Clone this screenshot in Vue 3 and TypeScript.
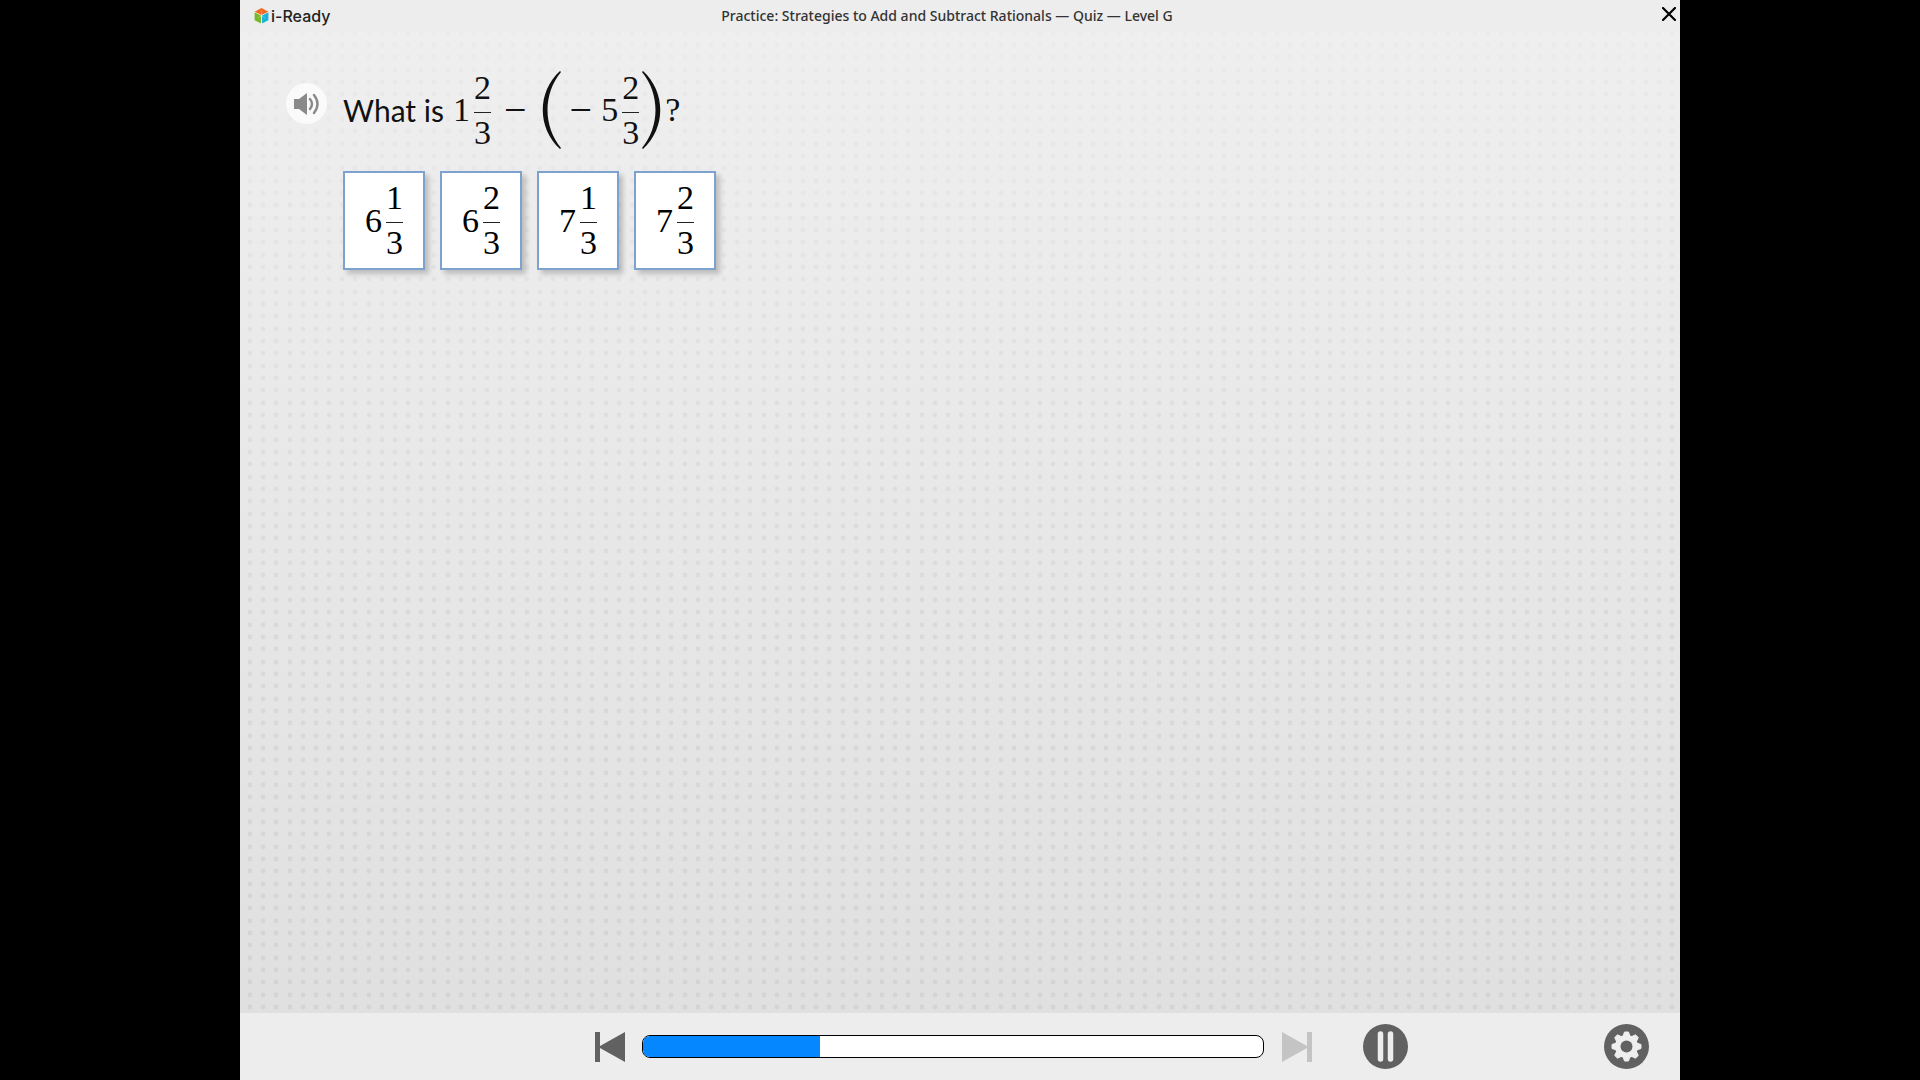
<script setup lang="ts">
import { ref } from 'vue'

interface Choice {
  whole: number
  top: number
  bottom: number
}

const choices: Choice[] = [
  { whole: 6, top: 1, bottom: 3 },
  { whole: 6, top: 2, bottom: 3 },
  { whole: 7, top: 1, bottom: 3 },
  { whole: 7, top: 2, bottom: 3 },
]

const progress = ref(28.6)
const dotColumns = [6, 19, 32, 46, 59, 72]
const dotRows = [7, 19, 32]
</script>

<template>
  <div class="player">
    <div class="lesson">
      <header class="topbar">
        <div class="brand">
          <svg class="cube" viewBox="0 0 28 30" aria-hidden="true">
            <path d="M14 1 27 7v16L14 29 1 23V7z" fill="#fff" />
            <path d="M14 0 27 7 14 13 1 7z" fill="#f26a21" />
            <path d="M1 8 13 14v15L1 23z" fill="#76b82a" />
            <path d="M27 8 15 14v15l12-6z" fill="#18b4d8" />
            <path d="M14 5v9l-7 5M14 14l7 5" fill="none" stroke="#fff" stroke-width="1" opacity="0.5" />
          </svg>
          <span class="brand-name">i-Ready</span>
        </div>
        <h1 class="title">Practice: Strategies to Add and Subtract Rationals — Quiz — Level G</h1>
        <button class="close" type="button" aria-label="Close">
          <svg viewBox="0 0 14 14" aria-hidden="true">
            <path d="M1 1 13 13M13 1 1 13" stroke="#000" stroke-width="2.2" stroke-linecap="round" />
          </svg>
        </button>
      </header>

      <main class="stage">
        <svg class="dots" aria-hidden="true">
          <defs>
            <pattern id="dot-grid" width="79" height="37" x="4" y="6" patternUnits="userSpaceOnUse">
              <template v-for="y in dotRows" :key="y">
                <circle v-for="x in dotColumns" :key="x" :cx="x" :cy="y" r="2.4" fill="#000" fill-opacity="0.05" />
              </template>
            </pattern>
          </defs>
          <rect width="100%" height="100%" fill="url(#dot-grid)" />
        </svg>

        <div class="content">
          <button class="speak" type="button" aria-label="Read aloud">
            <svg viewBox="0 0 26 22" aria-hidden="true">
              <path d="M0 6h5l8-6v22l-8-6H0z" fill="#8a8a8a" />
              <path d="M16 6q4 5 0 10M20 2q7 9 0 18" fill="none" stroke="#8a8a8a" stroke-width="2.4" stroke-linecap="round" />
            </svg>
          </button>

          <section class="question">
            <p class="prompt">
              <span class="words">What is</span>
              <span class="math">
                <span class="mixed"><span>1</span><span class="frac"><span class="numer">2</span><span class="denom">3</span></span></span>
                <span class="minus">−</span>
                <svg class="paren" viewBox="0 0 20 80" aria-hidden="true">
                  <path d="M18 1C-5 22-5 58 18 79l1-1C1 56 1 24 19 2z" fill="#111" />
                </svg>
                <span class="minus unary">−</span>
                <span class="mixed"><span>5</span><span class="frac"><span class="numer">2</span><span class="denom">3</span></span></span>
                <svg class="paren closing" viewBox="0 0 20 80" aria-hidden="true">
                  <path d="M2 1c23 21 23 57 0 78l-1-1C19 56 19 24 1 2z" fill="#111" />
                </svg>
                <span>?</span>
              </span>
            </p>
            <div class="choices">
              <button v-for="c in choices" :key="`${c.whole}-${c.top}`" class="choice" type="button">
                <span class="mixed"><span>{{ c.whole }}</span><span class="frac"><span class="numer">{{ c.top }}</span><span class="denom">{{ c.bottom }}</span></span></span>
              </button>
            </div>
          </section>
        </div>
      </main>

      <footer class="controls">
        <div class="transport">
          <button class="step" type="button" aria-label="Previous">
            <svg viewBox="0 0 30 30" aria-hidden="true"><path d="M0 0h5v14L30 0v30L5 16v14H0z" /></svg>
          </button>
          <div class="track" role="progressbar" aria-label="Lesson progress" :aria-valuenow="progress">
            <div class="fill" :style="{ width: `${progress}%` }"></div>
          </div>
          <button class="step next" type="button" aria-label="Next" disabled>
            <svg viewBox="0 0 30 30" aria-hidden="true"><path d="M30 0h-5v14L0 0v30l25-14v14h5z" /></svg>
          </button>
          <button class="round" type="button" aria-label="Pause">
            <svg viewBox="0 0 90 90" aria-hidden="true">
              <circle cx="45" cy="45" r="45" fill="#606160" />
              <path d="M35 20v50M55 20v50" stroke="#eee" stroke-width="11" stroke-linecap="round" />
            </svg>
          </button>
        </div>
        <button class="round" type="button" aria-label="Settings">
          <svg viewBox="-45 -45 90 90" aria-hidden="true">
            <circle r="45" fill="#606160" />
            <circle r="23" fill="#eee" />
            <path
              v-for="n in 8"
              :key="n"
              d="M-7-20-4-29h8l3 9z"
              fill="#eee"
              stroke="#eee"
              stroke-width="2"
              stroke-linejoin="round"
              :transform="`rotate(${n * 45})`"
            />
            <circle r="12" fill="#606160" />
          </svg>
        </button>
      </footer>
    </div>
  </div>
</template>

<style>
body {
  margin: 0;
  background: #000;
}
</style>

<style scoped>
.player {
  display: flex;
  justify-content: center;
  min-height: 100vh;
  background: #000;
}

.lesson {
  display: flex;
  flex-direction: column;
  width: 75%;
  background: #ededed;
}

button {
  padding: 0;
  border: 0;
  background: none;
  color: inherit;
  font: inherit;
}

svg {
  display: block;
}

.topbar {
  display: grid;
  grid-template-columns: 1fr auto 1fr;
  align-items: center;
  height: 32px;
  padding: 0 4px 0 14px;
}

.brand {
  display: flex;
  align-items: center;
  gap: 2px;
}

.cube {
  width: 15px;
  height: 16px;
}

.brand-name {
  color: #222;
  font: 500 16px/24px Inter, sans-serif;
}

.title {
  margin: 0 36px 0 0;
  color: #333;
  font: 500 14px/32px "Noto Sans", sans-serif;
}

.close {
  justify-self: end;
  width: 16px;
  height: 28px;
  margin-bottom: 4px;
}

.close svg {
  width: 14px;
  height: 14px;
  margin-left: 2px;
}

.stage {
  position: relative;
  flex: 1;
  background: linear-gradient(#efefef, #e0e0e0);
}

.dots {
  position: absolute;
  inset: 0;
  width: 100%;
  height: 100%;
  mask-image: linear-gradient(rgba(0, 0, 0, 0.3), #000 60%);
}

.content {
  position: relative;
  display: flex;
  align-items: flex-start;
  gap: 16px;
  padding: 36px 46px;
}

.speak {
  display: grid;
  place-items: center;
  width: 41px;
  height: 41px;
  margin-top: 15px;
  border-radius: 50%;
  background: #fafafa;
}

.speak svg {
  width: 26px;
  height: 22px;
}

.prompt {
  display: flex;
  align-items: center;
  height: 84px;
  margin: 0;
  color: #111;
}

.words {
  width: 110px;
  font: 400 30px/40px Lato, sans-serif;
  white-space: nowrap;
}

.math,
.choice {
  font: 400 34px/40px "Liberation Serif", serif;
}

.math {
  display: flex;
  align-items: center;
}

.mixed {
  display: flex;
  align-items: center;
  gap: 4px;
}

.frac {
  display: flex;
  flex-direction: column;
  width: 17px;
  text-align: center;
}

.numer {
  padding-bottom: 4px;
}

.denom {
  border-top: 1px solid #222;
}

.minus {
  margin: 0 15px 0 13px;
  font-size: 40px;
}

.unary {
  margin: 0 9px 0 8px;
}

.paren {
  width: 20px;
  height: 80px;
}

.closing {
  margin: 0 4px 0 2px;
}

.choices {
  display: flex;
  gap: 15px;
  margin-top: 19px;
}

.choice {
  display: grid;
  place-items: center;
  width: 82px;
  height: 99px;
  border: 2px solid #7da2cd;
  background: #fff;
  box-shadow: 4px 4px 5px rgba(0, 0, 0, 0.2);
  color: #000;
}

.controls {
  display: flex;
  align-items: center;
  height: 67px;
  padding: 0 31px;
}

.transport {
  display: flex;
  flex: 1;
  align-items: center;
  margin-left: 324px;
}

.step {
  width: 30px;
  height: 30px;
  fill: #606160;
}

.next {
  margin-right: 51px;
  fill: #c4c4c4;
}

.track {
  box-sizing: border-box;
  width: 622px;
  height: 23px;
  margin: 0 18px 0 17px;
  border: 1px solid #000;
  border-radius: 8px;
  background: #fff;
  overflow: hidden;
}

.fill {
  height: 100%;
  background: #0587ff;
}

.round {
  width: 45px;
  height: 45px;
}
</style>
